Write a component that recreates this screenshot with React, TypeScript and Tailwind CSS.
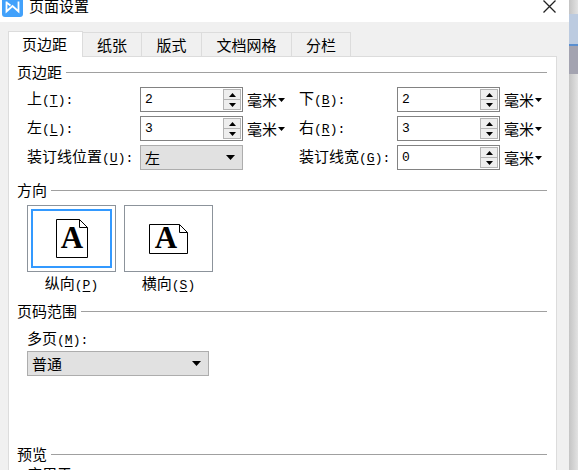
import type { ReactNode } from "react";

const Caret = () => (
  <svg viewBox="0 0 7 4" className="w-[7px] h-1 shrink-0" fill="#000" aria-hidden="true">
    <path d="M0 0h7L3.5 4z" />
  </svg>
);

const Hotkey = ({ text, k, colon = true }: { text: string; k: string; colon?: boolean }) => (
  <>
    {text}
    <span className="font-['Liberation_Mono',monospace] text-[13px]">
      (<span className="underline underline-offset-2">{k}</span>){colon && ":"}
    </span>
  </>
);

const SectionTitle = ({ children }: { children: ReactNode }) => (
  <div className="flex items-center gap-1 h-5">
    <h2 className="shrink-0">{children}</h2>
    <div className="flex-1 border-t border-[#a0a0a0]" />
  </div>
);

const Spinner = ({ id, value }: { id: string; value: string }) => (
  <div className="flex w-[103px] h-[25px] border border-[#828282] bg-white p-px">
    <input
      id={id}
      defaultValue={value}
      className="flex-1 min-w-0 pl-[3px] font-['Liberation_Mono',monospace] text-[13px] outline-none"
    />
    <div className="flex flex-col w-[18px]">
      <button aria-label="增加" className="flex-1 flex items-center justify-center border border-[#b4b4b4] bg-[#eeeeee]">
        <svg viewBox="0 0 7 4" className="w-[7px] h-1" aria-hidden="true">
          <path d="M0 4h7L3.5 0z" />
        </svg>
      </button>
      <button aria-label="减少" className="flex-1 flex items-center justify-center border border-t-0 border-[#b4b4b4] bg-[#eeeeee]">
        <Caret />
      </button>
    </div>
  </div>
);

const Unit = () => (
  <button className="flex items-center gap-px pl-1">
    毫米
    <Caret />
  </button>
);

const Dropdown = ({ id, options, className }: { id: string; options: string[]; className: string }) => (
  <div className={`grid items-center h-[25px] border border-[#adadad] bg-[#e1e1e1] ${className}`}>
    <select id={id} className="col-start-1 row-start-1 w-full appearance-none pl-1 outline-none">
      {options.map((o) => (
        <option key={o}>{o}</option>
      ))}
    </select>
    <svg viewBox="0 0 9 5" className="col-start-1 row-start-1 justify-self-end w-[9px] h-[5px] mr-[7px] pointer-events-none" aria-hidden="true">
      <path d="M0 0h9L4.5 5z" />
    </svg>
  </div>
);

const tabs = [
  { name: "纸张", width: "w-[59px]" },
  { name: "版式", width: "w-[60px]" },
  { name: "文档网格", width: "w-[90px]" },
  { name: "分栏", width: "w-[59px]" },
];

const App = () => {
  return (
    <div className="flex h-screen overflow-hidden bg-[#dcdcdc] text-[15px] leading-5 text-black font-['Noto_Sans_CJK_SC',sans-serif]">
      <main className="flex-1 min-w-0 flex flex-col bg-[#f0f0f0]">
        {/* TITLE BAR */}
        <header className="-mt-[10px] h-8 shrink-0 flex items-center bg-white pl-[2px] pr-[13px]">
          <svg viewBox="0 0 21 21" className="w-[21px] h-[21px]" aria-hidden="true">
            <rect width="21" height="21" rx="3" fill="#42a1fb" />
            <path d="M4.5 5.5v10l6-5.5 6 5.5v-10M4.5 6.5l4 3" fill="none" stroke="#fff" strokeWidth="1.8" />
          </svg>
          <h1 className="flex-1 pl-[6px]">页面设置</h1>
          <button aria-label="关闭">
            <svg viewBox="0 0 13 13" className="w-[13px] h-[13px]" stroke="#222" strokeWidth="1.3" aria-hidden="true">
              <path d="M.5.5l12 12M12.5.5l-12 12" />
            </svg>
          </button>
        </header>

        <div className="flex-1 flex flex-col pl-2 pr-3 pt-[9px]">
          {/* TABS */}
          <div role="tablist" className="flex items-end">
            <button role="tab" aria-selected="true" className="relative z-10 w-[75px] h-[26px] -mb-px border border-b-0 border-[#dcdcdc] bg-white pr-[2px] pb-[2px]">
              页边距
            </button>
            {tabs.map((t) => (
              <button key={t.name} role="tab" aria-selected="false" className={`${t.width} h-6 border-t border-r border-[#dcdcdc]`}>
                {t.name}
              </button>
            ))}
          </div>

          <div className="flex-1 border border-[#dcdcdc] bg-white pl-2 pr-[9px] pt-[5px]">
            {/* MARGINS */}
            <SectionTitle>页边距</SectionTitle>
            <div className="grid grid-cols-[113px_103px_56px_98px_103px_auto] gap-y-1 items-center justify-start pl-[10px] pt-[5px] whitespace-nowrap">
              <label htmlFor="top"><Hotkey text="上" k="T" /></label>
              <Spinner id="top" value="2" />
              <Unit />
              <label htmlFor="bottom"><Hotkey text="下" k="B" /></label>
              <Spinner id="bottom" value="2" />
              <Unit />
              <label htmlFor="left"><Hotkey text="左" k="L" /></label>
              <Spinner id="left" value="3" />
              <Unit />
              <label htmlFor="right"><Hotkey text="右" k="R" /></label>
              <Spinner id="right" value="3" />
              <Unit />
              <label htmlFor="gutterPos"><Hotkey text="装订线位置" k="U" /></label>
              <Dropdown id="gutterPos" options={["左", "上"]} className="w-[103px]" />
              <span />
              <label htmlFor="gutter"><Hotkey text="装订线宽" k="G" /></label>
              <Spinner id="gutter" value="0" />
              <Unit />
            </div>

            {/* ORIENTATION */}
            <div className="pt-[10px]">
              <SectionTitle>方向</SectionTitle>
            </div>
            <div className="flex gap-2 pl-[10px] pt-[5px]">
              <button className="flex flex-col items-center">
                <span className="w-[89px] h-[67px] border border-[#8c939b] p-[3px]">
                  <span className="flex h-full items-center justify-center border-2 border-[#3399ff]">
                    <svg viewBox="0 0 32 39" className="w-8 h-[39px] overflow-visible" fill="none" stroke="#000" aria-hidden="true">
                      <path d="M.5.5h23l8 8v30H.5zM23.5.5v8h8" />
                      <text x="16" y="29" textAnchor="middle" fontSize="31" fontWeight="bold" fontFamily="Liberation Serif, serif" fill="#000" stroke="none">A</text>
                    </svg>
                  </span>
                </span>
                <span className="pt-px"><Hotkey text="纵向" k="P" colon={false} /></span>
              </button>
              <button className="flex flex-col items-center">
                <span className="flex w-[89px] h-[67px] items-center justify-center border border-[#8c939b]">
                  <svg viewBox="0 0 39 30" className="w-[39px] h-[30px] overflow-visible" fill="none" stroke="#000" aria-hidden="true">
                    <path d="M.5.5h30l8 8v21H.5zM30.5.5v8h8" />
                    <text x="17" y="24" textAnchor="middle" fontSize="31" fontWeight="bold" fontFamily="Liberation Serif, serif" fill="#000" stroke="none">A</text>
                  </svg>
                </span>
                <span className="pt-px"><Hotkey text="横向" k="S" colon={false} /></span>
              </button>
            </div>

            {/* PAGES */}
            <div className="pt-[5px]">
              <SectionTitle>页码范围</SectionTitle>
            </div>
            <div className="flex flex-col pl-[10px] pt-[7px]">
              <label htmlFor="pages"><Hotkey text="多页" k="M" /></label>
              <Dropdown id="pages" options={["普通", "对称页边距"]} className="w-[182px]" />
            </div>

            {/* PREVIEW */}
            <div className="pt-[68px]">
              <SectionTitle>预览</SectionTitle>
            </div>
            <div className="pl-[10px]">
              <Hotkey text="应用于" k="Y" />
            </div>
          </div>
        </div>
      </main>

      {/* WINDOW BEHIND */}
      <aside className="w-[9px] flex flex-col bg-linear-to-r from-[#c4c4c4] to-[#e2e2e2]">
        <div className="h-[14px]" />
        <div className="h-[30px] bg-[#bccbe0]" />
        <div className="h-[2px] bg-[#5a8fd0]" />
        <div className="h-7 bg-[#a3a3b0]" />
      </aside>
    </div>
  );
};

export default App;
